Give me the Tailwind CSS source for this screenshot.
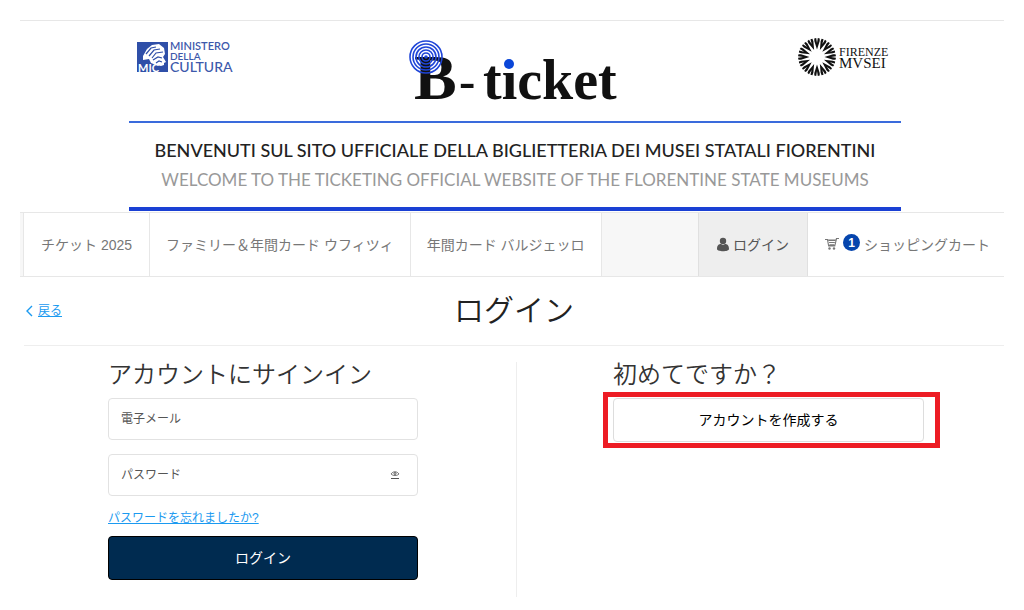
<!DOCTYPE html>
<html lang="ja">
<head>
    <meta charset="UTF-8">
    <meta name="viewport" content="width=device-width, initial-scale=1.0">
    <title>ログイン - B-ticket</title>
    <script src="https://cdn.jsdelivr.net/npm/@tailwindcss/browser@4"></script>
</head>
<body class="bg-white px-5 pt-5 font-['Liberation_Sans','Noto_Sans_CJK_JP',sans-serif] text-sm text-[#333]">
    <!-- Header -->
    <header class="border-t border-[#e7e7e7] pb-px pl-1.5">
        <div class="mx-auto max-w-[772px]">
            <div class="flex h-[100px] items-start justify-between px-2">
                <svg class="mt-5 h-9 w-25" viewBox="0 0 100 36" role="img" aria-label="Ministero della Cultura">
                    <rect x="0" y="1" width="31" height="30" fill="#2f4fa8" />
                    <path d="M6 15l4-7 5-4 7-1 5 4 1 6-2 3 3 5-2 1v2l-3 1-5-1-5-2-2-4-6 1z" fill="#fff" />
                    <path d="M9 13l5-6 5-1M12 15l5-6 6-1M15 17l4-5 7-1M16 19l5-3 4 1M19 22l3-2 3 1" fill="none" stroke="#2f4fa8" stroke-width="1.2" />
                    <text x="1" y="31" fill="#fff" class="font-['Lato'] text-[11px] font-bold">MIC</text>
                    <text x="33" y="9" fill="#3d59ab" class="font-['Lato'] text-[11px] font-semibold">MINISTERO</text>
                    <text x="33" y="19" fill="#3d59ab" class="font-['Lato'] text-[10px] font-semibold">DELLA</text>
                    <text x="33" y="31" fill="#3d59ab" class="font-['Lato'] text-[14px] font-medium">CULTURA</text>
                </svg>
                <svg class="mt-4 h-18 w-54" viewBox="0 0 216 72" role="img" aria-label="B-ticket">
                    <g fill="#111" class="font-['Liberation_Serif'] font-bold">
                        <text x="5" y="62" class="text-[64px]">B</text>
                        <text x="50" y="60" class="text-[49px]">-</text>
                        <text x="74" y="62" class="text-[56px]">tıcket</text>
                    </g>
                    <circle cx="100" cy="27" r="5" fill="#0a46d8" />
                    <g fill="none" stroke="#1f45d8" stroke-width="1.6">
                        <circle cx="17" cy="20" r="16" />
                        <circle cx="17" cy="20" r="13" />
                        <circle cx="17" cy="20" r="10" />
                        <circle cx="17" cy="20" r="7" />
                        <circle cx="17" cy="20" r="4" />
                        <circle cx="17" cy="20" r="1" />
                    </g>
                </svg>
                <svg class="mt-4 h-10 w-24" viewBox="0 0 96 40" role="img" aria-label="Firenze Musei">
                    <defs>
                        <path id="petal" d="M20 12.500l-2.700-8.500v-2.500l1.900-.5.800 5 .8-5 1.900.5v2.500z" />
                        <g id="quarter">
                            <use href="#petal" />
                            <use href="#petal" transform="rotate(22.5 20 20)" />
                            <use href="#petal" transform="rotate(45 20 20)" />
                            <use href="#petal" transform="rotate(67.5 20 20)" />
                        </g>
                    </defs>
                    <g fill="#111">
                        <use href="#quarter" />
                        <use href="#quarter" transform="rotate(90 20 20)" />
                        <use href="#quarter" transform="rotate(180 20 20)" />
                        <use href="#quarter" transform="rotate(270 20 20)" />
                        <text x="42" y="19" class="font-['Liberation_Serif'] text-[12px]">FIRENZE</text>
                        <text x="42" y="31" class="font-['Liberation_Serif'] text-[15px]">MVSEI</text>
                    </g>
                </svg>
            </div>
            <div class="flex flex-col items-center border-t-2 border-b-4 border-t-[#3a6bdc] border-b-[#1a40d4] pt-2 pb-3 font-['Lato'] text-lg whitespace-nowrap">
                <p class="pt-1 leading-[30px] font-medium text-[#222]">BENVENUTI SUL SITO UFFICIALE DELLA BIGLIETTERIA DEI MUSEI STATALI FIORENTINI</p>
                <p class="text-[17px] leading-[30px] text-[#999]">WELCOME TO THE TICKETING OFFICIAL WEBSITE OF THE FLORENTINE STATE MUSEUMS</p>
            </div>
        </div>
    </header>

    <!-- Navigation -->
    <nav class="flex h-[65px] items-stretch border-y border-[#e7e7e7] bg-[#f7f7f7] pl-[3px] whitespace-nowrap text-[#777]">
        <a href="#" class="flex items-center border-x border-[#e7e7e7] bg-white px-[17px]">チケット 2025</a>
        <a href="#" class="flex items-center border-r border-[#e7e7e7] bg-white px-4">ファミリー＆年間カード ウフィツィ</a>
        <a href="#" class="flex items-center border-r border-[#e7e7e7] bg-white px-4">年間カード バルジェッロ</a>
        <a href="#" class="ml-auto flex items-center gap-1 border-x border-[#e0e0e0] bg-[#eee] px-[18px] text-[#555]">
            <svg class="h-4 w-3" viewBox="0 0 12 16" fill="#555">
                <circle cx="6" cy="4" r="3.2" />
                <path d="M0 12c0-4 2-5 4-5l2 1 2-1c2 0 4 1 4 5 0 3-12 3-12 0z" />
            </svg>
            ログイン
        </a>
        <a href="#" class="flex items-center gap-1 bg-white pr-3.5 pl-[17px]">
            <svg class="mb-0.5 h-3 w-3.5" viewBox="0 0 14 12" fill="#777">
                <path d="M0 1h3l1 6h5.500l1.500-7h3v1h-2l-1.800 7.500H3.200L2 2H0z" />
                <path d="M3 1.500h8l-.3 1.500H3.300zM4 4h6l-.3 1H4.200zM4.300 6h5.200v.8H4.500z" />
                <circle cx="4.500" cy="10.500" r="1.2" />
                <circle cx="9" cy="10.500" r="1.2" />
            </svg>
            <span class="mb-1 flex size-[17px] items-center justify-center rounded-full bg-[#0645ad] text-xs font-bold text-white">1</span>
            ショッピングカート
        </a>
    </nav>

    <main class="pl-1">
        <div class="grid h-[69px] grid-cols-[1fr_auto_1fr] items-center border-b border-[#eee]">
            <a href="#" class="flex items-center gap-1 text-xs text-[#1b9af0]">
                <svg class="h-3 w-2.5" viewBox="0 0 10 12" fill="none" stroke="#1b9af0" stroke-width="1.4"><path d="M8 1L3 6l5 5" /></svg>
                <span class="underline">戻る</span>
            </a>
            <h1 class="text-3xl font-[350] text-[#222]">ログイン</h1>
        </div>

        <div class="grid grid-cols-2 gap-1 pt-4">
            <form class="pr-[94px] pl-21">
                <h2 class="mb-2.5 text-2xl leading-[26px] font-[350]">アカウントにサインイン</h2>
                <input type="email" aria-label="電子メール" placeholder="電子メール" class="mb-3.5 block h-[42px] w-full rounded border border-[#e2e2e2] px-3 text-xs placeholder:text-[#555]">
                <div class="relative">
                    <input type="password" aria-label="パスワード" placeholder="パスワード" class="block h-[42px] w-full rounded border border-[#e2e2e2] px-3 text-xs placeholder:text-[#555]">
                    <button type="button" aria-label="パスワードを表示" class="absolute top-4 right-4.5">
                        <svg class="h-2.5 w-2.5" viewBox="0 0 10 10" fill="none" stroke="#555">
                            <path d="M1 4c2-3 6-3 8 0-2 2-6 2-8 0z" stroke-width=".8" />
                            <circle cx="5" cy="3.500" r="1" />
                            <path d="M1 8.500h8" />
                        </svg>
                    </button>
                </div>
                <a href="#" class="mt-3 mb-2 block text-xs leading-5 text-[#1b9af0] underline">パスワードを忘れましたか?</a>
                <button type="submit" class="h-11 w-full rounded border border-black bg-[#002b50] text-white">ログイン</button>
            </form>

            <section class="h-[235px] border-l border-[#eee] pr-20 pl-24">
                <h2 class="mb-2.5 text-2xl leading-[26px] font-[350]">初めてですか？</h2>
                <div class="relative">
                    <button type="button" class="h-11 w-full rounded border border-[#ddd] bg-white text-black">アカウントを作成する</button>
                    <div class="pointer-events-none absolute -inset-y-1.5 -right-4 -left-2.5 border-5 border-[#ed1c24]"></div>
                </div>
            </section>
        </div>
    </main>
</body>
</html>
